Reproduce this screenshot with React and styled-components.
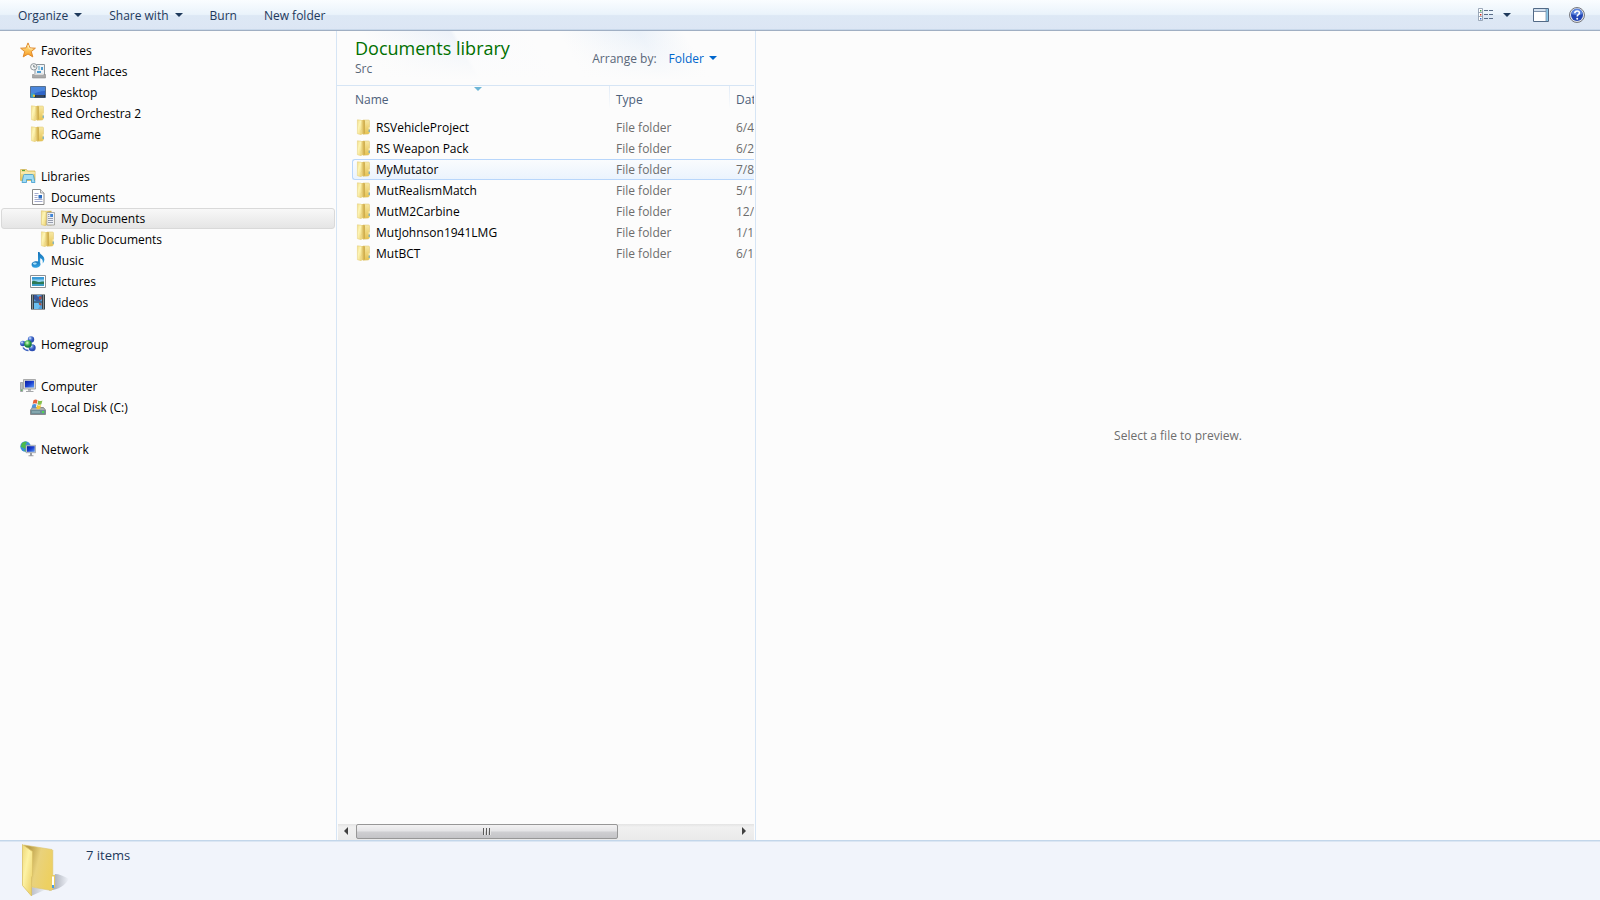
import React from "react";
import styled, { createGlobalStyle, css } from "styled-components";

const GlobalStyle = createGlobalStyle`
  * {
    box-sizing: border-box;
  }
  body {
    margin: 0;
    background: #fcfcfc;
    color: #000;
    font: 12px/19px "Open Sans", "Noto Sans", sans-serif;
  }
  button, th, td {
    font: inherit;
  }
`;

const Window = styled.div`
  display: flex;
  flex-direction: column;
  min-height: 100vh;
`;

/* toolbar */

const Toolbar = styled.header`
  display: flex;
  justify-content: space-between;
  height: 31px;
  padding: 0 15px 0 18px;
  background: linear-gradient(#fafdff 0%, #eaf3fb 48%, #dde8f5 52%, #dce6f4 100%);
  border-bottom: 1px solid #a0afc3;
  box-shadow: inset 0 -1px #c8d8ea;
`;

const ToolGroup = styled.div`
  display: flex;
  align-items: center;
  gap: ${(p) => p.$gap}px;
`;

const ToolButton = styled.button`
  display: flex;
  align-items: center;
  gap: 6px;
  padding: 0;
  border: 0;
  background: none;
  color: #1e395b;
`;

const ViewButton = styled(ToolButton)`
  gap: 9px;
  padding-right: 2px;
`;

const Caret = styled.span`
  border: 4px solid transparent;
  border-top-color: currentColor;
  border-bottom: 0;
`;

/* panes */

const Panes = styled.div`
  display: grid;
  grid-template-columns: 337px 419px 1fr;
  flex: 1;
`;

const Sidebar = styled.nav`
  display: flex;
  flex-direction: column;
  gap: 21px;
  padding: 9px 1px;
  border-right: 1px solid #d6e5f5;
`;

const Tree = styled.ul`
  margin: 0;
  padding: 0;
  list-style: none;
`;

const TreeLink = styled.a`
  display: flex;
  align-items: center;
  gap: 5px;
  height: 21px;
  padding-left: ${(p) => 18 + p.$level * 10}px;
  border: 1px solid transparent;
  border-radius: 3px;
  color: #000;
  text-decoration: none;
  ${(p) =>
    p.$selected &&
    css`
      border-color: #d9d9d9;
      background: linear-gradient(#f8f8f8, #e5e5e5);
    `}

  svg {
    margin-bottom: 1px;
  }
`;

const Library = styled.main`
  display: flex;
  flex-direction: column;
  min-width: 0;
  border-right: 1px solid #d6e5f5;
`;

const LibraryHeader = styled.div`
  display: flex;
  justify-content: space-between;
  height: 54px;
  padding: 5px 38px 0 18px;
  background: linear-gradient(rgba(252, 252, 252, 0), #fcfcfc 90%),
    linear-gradient(60deg, #fcfcfc 12%, #edf2f9 32%, #f9fbfd 33%, #fcfcfc 50%, #fcfcfc 56%, #eaf1f9 74%, #fcfcfc 84%);
`;

const Title = styled.h1`
  margin: 0;
  color: #007000;
  font-size: 18px;
  font-weight: 400;
  line-height: 24px;
`;

const Subtitle = styled.div`
  color: #5a6779;
  line-height: 18px;
`;

const Arrange = styled.div`
  display: flex;
  align-items: center;
  gap: 12px;
  height: 44px;
  color: #5a6779;
`;

const ArrangeButton = styled(ToolButton)`
  gap: 5px;
  color: #0066cc;
`;

const ListArea = styled.div`
  flex: 1;
  margin-right: 1px;
  overflow: hidden;
`;

const FileTable = styled.table`
  width: 600px;
  table-layout: fixed;
  border-collapse: separate;
  border-spacing: 0;
`;

const HeadCell = styled.th`
  position: relative;
  width: ${(p) => p.$width}px;
  height: 32px;
  padding: 4px 6px 8px ${(p) => p.$indent}px;
  color: #4c607a;
  font-weight: 400;
  text-align: left;
  background: linear-gradient(#d6e5f5, #d6e5f5) top / 100% 1px no-repeat,
    linear-gradient(#dfeaf7, #fcfcfc) right top / 1px 24px no-repeat;
`;

const SortMark = styled(Caret)`
  position: absolute;
  top: 2px;
  left: 50%;
  color: #6cb5d6;
`;

const Cell = styled.td`
  height: 21px;
  padding: 0 0 0 6px;
  color: #6d6d6d;
  line-height: 19px;
  white-space: nowrap;
`;

const NameCell = styled(Cell)`
  padding: 0 0 0 15px;
`;

const FileName = styled.div`
  display: flex;
  align-items: center;
  gap: 4px;
  height: 21px;
  padding-left: 3px;
  border: 1px solid transparent;
  border-right: 0;
  border-radius: 3px 0 0 3px;
  color: #000;

  svg {
    margin-bottom: 1px;
  }
`;

const FileRow = styled.tr`
  ${(p) =>
    p.$hover &&
    css`
      ${FileName}, ${Cell}:not(:first-child) {
        background: linear-gradient(#fafcfe, #ebf3fd);
      }
      ${FileName} {
        border-color: #b8d6fb;
      }
      ${Cell}:not(:first-child) {
        border: solid #b8d6fb;
        border-width: 1px 0;
      }
    `}
`;

const ScrollBar = styled.div`
  display: flex;
  height: 16px;
  margin: 0 1px;
  background: linear-gradient(#e3e3e3, #f0f0f0 3px, #eaeaea);
`;

const ScrollButton = styled.button`
  display: flex;
  align-items: center;
  justify-content: center;
  width: 18px;
  padding: 0 2px 2px 0;
  border: 0;
  background: none;
`;

const ScrollTrack = styled.div`
  flex: 1;
`;

const ScrollThumb = styled.div`
  display: flex;
  align-items: center;
  justify-content: center;
  gap: 1px;
  width: 69%;
  height: 15px;
  border: 1px solid #979797;
  border-radius: 2px;
  background: linear-gradient(#f3f2f3 0%, #e4e4e6 48%, #cfcfd2 52%, #c4c4c7 100%);
`;

const Grip = styled.span`
  width: 2px;
  height: 7px;
  background: linear-gradient(90deg, #5a5a5a 50%, #e8e8e8 50%);
`;

const Preview = styled.aside`
  display: flex;
  align-items: center;
  justify-content: center;
  color: #6d6d6d;
`;

const StatusBar = styled.footer`
  display: flex;
  gap: 16px;
  height: 60px;
  padding: 2px 21px;
  border-top: 1px solid #c3d6ea;
  background: #f1f4fb;
  box-shadow: inset 0 1px #dbe6f3;
  color: #1e395b;
`;

const ItemCount = styled.span`
  font-size: 13px;
  line-height: 24px;
`;

/* icons */

const Icon = ({ children }) => (
  <svg width="16" height="16" viewBox="0 0 16 16" aria-hidden="true">
    {children}
  </svg>
);

const Gradients = () => (
  <svg width="0" height="0" style={{ display: "block" }} aria-hidden="true">
    <defs>
      <linearGradient id="gold" x2="0" y2="1">
        <stop offset="0" stopColor="#f7e8a4" />
        <stop offset="1" stopColor="#e6c250" />
      </linearGradient>
      <linearGradient id="goldInner" x2="1">
        <stop offset="0" stopColor="#f6e7a2" />
        <stop offset=".55" stopColor="#dcbc5c" />
        <stop offset="1" stopColor="#c7a545" />
      </linearGradient>
      <linearGradient id="goldFlap" x2="1" y2="1">
        <stop offset="0" stopColor="#f3df8c" />
        <stop offset=".4" stopColor="#fdf5b6" />
        <stop offset="1" stopColor="#eed274" />
      </linearGradient>
      <linearGradient id="star" x2="0" y2="1">
        <stop offset="0" stopColor="#fff0a0" />
        <stop offset="1" stopColor="#f99a1c" />
      </linearGradient>
      <linearGradient id="screen" x2="1" y2="1">
        <stop offset="0" stopColor="#0a1c9c" />
        <stop offset=".5" stopColor="#1a3fd0" />
        <stop offset="1" stopColor="#5d9cf5" />
      </linearGradient>
      <linearGradient id="note" x2="0" y2="1">
        <stop offset="0" stopColor="#1773b8" />
        <stop offset="1" stopColor="#35a7e6" />
      </linearGradient>
      <radialGradient id="ballBlue" cx=".35" cy=".3">
        <stop offset="0" stopColor="#e4f0ff" />
        <stop offset=".5" stopColor="#5b83d8" />
        <stop offset="1" stopColor="#2c4fb4" />
      </radialGradient>
      <radialGradient id="ballGreen" cx=".4" cy=".35">
        <stop offset="0" stopColor="#e2fbd0" />
        <stop offset=".6" stopColor="#48b850" />
        <stop offset="1" stopColor="#1a7d3e" />
      </radialGradient>
      <linearGradient id="bigBack" x2="1" y2=".4">
        <stop offset=".2" stopColor="#bb9f4a" />
        <stop offset=".55" stopColor="#e9d27c" />
        <stop offset="1" stopColor="#edd062" />
      </linearGradient>
      <linearGradient id="bigFlap" x2="1" y2="1">
        <stop offset="0" stopColor="#eed878" />
        <stop offset=".4" stopColor="#fdf2a4" />
        <stop offset="1" stopColor="#e9cb5e" />
      </linearGradient>
      <linearGradient id="shade" x2="1">
        <stop offset="0" stopColor="#6f7480" stopOpacity=".7" />
        <stop offset="1" stopColor="#6f7480" stopOpacity="0" />
      </linearGradient>
    </defs>
  </svg>
);

const FolderIcon = () => (
  <Icon>
    <path d="M7 1h5.500q1 0 1 1v11.500l-1 1.500-5.500.300z" fill="url(#gold)" stroke="#dfc46c" strokeWidth=".5" />
    <path d="M5 1h3.500l.4 1v12.500L5 15.500z" fill="url(#goldInner)" />
    <path d="M1.400.800 5 1.200l.8 1V10l-.6 1v4.700l-3.800-1z" fill="url(#goldFlap)" stroke="#e3cb74" strokeWidth=".5" />
    <path d="M12.700 8.200h1v2.300h-1z" fill="#fff8d8" />
    <path d="M12.700 10.500h1V13h-1z" fill="#5aa6d8" />
  </Icon>
);

const MyDocsIcon = () => (
  <Icon>
    <path d="M5 .8h6.500v14.500H5z" fill="url(#goldInner)" />
    <path d="M6.800 2.500h7.700v12.500H6.800z" fill="#eef0f4" stroke="#9b9b93" strokeWidth=".8" />
    <path d="M8 4.500h1.500M8 6.500h1.500M8 8.500h5M8 10.500h5M8 12.500h5" stroke="#8b93a6" strokeWidth=".9" />
    <path d="M10.200 4H13v3h-2.800z" fill="#3f84d6" />
    <path d="M1.400.800 5.400 1.300l.8 1V10l-.6 1v4.700l-4.200-1z" fill="url(#goldFlap)" stroke="#dcc168" strokeWidth=".6" />
  </Icon>
);

const StarIcon = () => (
  <Icon>
    <path
      d="m8 .9 2 5 5.400.3-4.100 3.400 1.500 5.300L8 12l-4.800 2.900 1.500-5.300L.6 6.200 6 5.900z"
      fill="url(#star)"
      stroke="#e08a2e"
      strokeLinejoin="round"
    />
    <path d="m8 3 1.200 3.800 3.300.3" fill="none" stroke="#fff6c8" strokeWidth=".8" />
  </Icon>
);

const RecentIcon = () => (
  <Icon>
    <path d="M5 1.500h9.500V12H5z" fill="#eef3f6" stroke="#8d959c" />
    <path d="M8 4h2M8 6h2M7 8.500h2" stroke="#58a4c8" />
    <path d="M11 4h2v3h-2zM7 8h4v2H7z" fill="#4b9bd0" />
    <path d="M2.500 11.500h13v3.500h-13z" fill="#a9a9a9" stroke="#8a8a8a" strokeWidth=".6" />
    <path d="M4 12h10l-1-1.500H5z" fill="#d8d8d8" />
    <circle cx="3.800" cy="3.800" r="3.200" fill="#f2f4f5" stroke="#8f979c" />
    <path d="M3.800 2v2h1.700" fill="none" stroke="#566" strokeWidth=".8" />
  </Icon>
);

const DesktopIcon = () => (
  <Icon>
    <path d="M.5 2.500h15v11H.5z" fill="#2f65c8" stroke="#56708f" />
    <path d="M1 3h14v4C10 7 5 9 1 11z" fill="#4a86dc" />
    <path d="M4 11h11v2.500H4z" fill="#1f2f42" />
    <path d="M1 9.500h3.500v4H1z" fill="#38a6c8" />
    <circle cx="4" cy="11.800" r="1.200" fill="#e8c430" />
    <path d="M6 12h8" stroke="#4c5b6c" />
  </Icon>
);

const LibrariesIcon = () => (
  <Icon>
    <path d="M.5 1.500h6l1 1.500h7.500v9.500H.5z" fill="url(#gold)" stroke="#d5b65a" strokeWidth=".8" />
    <path d="M2 2.500h3" stroke="#5aa33c" strokeWidth="1.200" />
    <path d="M1 5h14" stroke="#fdf6cf" />
    <path d="M3.500 7.500q0-1 1-1h8q1 0 1 1l1.500 7h-3.500v-3h-5v3H2z" fill="#9fdcf5" stroke="#3f9cce" strokeWidth=".8" />
  </Icon>
);

const DocumentIcon = () => (
  <Icon>
    <path d="M2.500.5h8l3.500 3.500v11.500H2.500z" fill="#fff" stroke="#8a8a8a" />
    <path d="M10.500.5V4H14" fill="#e8e8e8" stroke="#8a8a8a" strokeWidth=".8" />
    <path d="M4.500 4.500h4M4.500 6.500h3M4.500 8.500h3M4.500 10.500h8M4.500 12.500h8" stroke="#9aa2c6" strokeWidth=".9" />
    <path d="M8.500 6H12v3.500H8.500z" fill="#2c6cc0" />
  </Icon>
);

const MusicIcon = () => (
  <Icon>
    <path d="M8 0h1.500c.5 3 5.300 3.500 4.800 8-.2 1.500-.8 2.700-1.700 3.400.7-2.700-.3-4.400-2.400-5.100v7L8 12z" fill="url(#note)" />
    <ellipse cx="6" cy="12.500" rx="4.400" ry="3.200" fill="url(#note)" transform="rotate(-12 6 12.500)" />
    <ellipse cx="4.800" cy="11.600" rx="2" ry="1.100" fill="#a6def8" />
  </Icon>
);

const PictureIcon = () => (
  <Icon>
    <path d="M.5 2.500h15v12H.5z" fill="#fff" stroke="#8a8f94" />
    <path d="M2 4h12v9H2z" fill="#8ed0f0" />
    <path d="M2 4h12v2.500H2z" fill="#3a9bd8" />
    <path d="M2 8.500c2-1.500 4 0 6 .5s4-1 6-.5V11H2z" fill="#2d7a55" />
    <path d="M2 11h12v2H2z" fill="#3b9cc4" />
  </Icon>
);

const VideoIcon = () => (
  <Icon>
    <path d="M1 .5h14v15H1z" fill="#2f3a40" />
    <path d="M4 1h8v6.500H4zM4 8.500h8V15H4z" fill="#4f9fdc" />
    <path d="M4 1h2.500L8 3l4-2v3L10 7H6L4 5z" fill="#3a5a9c" />
    <path d="M9 2.500h2.500v3H9zM9 8.500l2.500 1v2L9 11z" fill="#b5523c" />
    <path d="M4 9h4l2 3-2 3H4z" fill="#6cc0f0" />
    <path d="M2.500 1.500v14M13.500 1.500v14" stroke="#dfe6e8" strokeWidth="1.200" strokeDasharray="1 1" />
  </Icon>
);

const HomegroupIcon = () => (
  <Icon>
    <circle cx="11" cy="3.500" r="3.200" fill="url(#ballBlue)" />
    <circle cx="2.800" cy="7.500" r="2.700" fill="url(#ballBlue)" />
    <circle cx="12.200" cy="11.800" r="3.500" fill="url(#ballBlue)" />
    <path d="M3 11.500c1.500 2.500 3 3 5.500 3" fill="none" stroke="#3d63c0" strokeWidth="1.400" />
    <circle cx="8" cy="8" r="3.800" fill="url(#ballGreen)" />
  </Icon>
);

const ComputerIcon = () => (
  <Icon>
    <path d="M.5 4.500h2.200v9H.5z" fill="#b9bdc2" stroke="#8b8f94" strokeWidth=".7" />
    <path d="M1 11.500h1.300v1.300H1z" fill="#4db04d" />
    <path d="M3.500 1.500h12v9.500h-12z" fill="#d8d8d4" stroke="#98999a" strokeWidth=".8" />
    <path d="M5 2.800h9v6.700H5z" fill="url(#screen)" />
    <path d="M8 11h3v1.800H8zM6 13h7.500v1H6z" fill="#a5a7aa" />
  </Icon>
);

const DiskIcon = () => (
  <Icon>
    <path d="M2.500 8.500h11l2 2.500v4.500H.5V11z" fill="#a9acae" stroke="#77797b" strokeWidth=".8" />
    <path d="M1 11h14.200v4H1z" fill="#6d8d96" />
    <path d="M2 13h8" stroke="#9cc0c6" />
    <path d="M12 12h2v2h-2z" fill="#51d651" />
    <path d="M3.500 1.200c1.500-1 3-.8 4 0L6.700 4.800c-1.200-.8-2.500-.8-4 0z" fill="#e8623a" />
    <path d="M8.200 1.500c1.300.8 2.700.7 4.200 0l-1 3.800c-1.300.7-2.700.7-4 0z" fill="#86bf4b" />
    <path d="M2.500 5.500c1.500-.8 3-.7 4 0l-1 3.600c-1.200-.8-2.500-.7-4 0z" fill="#4d93dc" />
    <path d="M7.200 6c1.300.8 2.700.7 4 0l-1 3.600c-1.300.7-2.600.7-4 0z" fill="#f5c738" />
  </Icon>
);

const NetworkIcon = () => (
  <Icon>
    <circle cx="5.500" cy="5.500" r="5.200" fill="#3b8ed8" />
    <path d="M2 2c2-1.500 4-1.500 5-1L5.500 3.500 6 6 4.500 8 3 6.500.8 6zM4 9l2 .5v1.200L4.500 10z" fill="#4dbb4a" />
    <path d="M6 4.300h9.600v7.400H6z" fill="#d4d8de" stroke="#90969e" strokeWidth=".7" />
    <path d="M7 5.200h7.700v5.600H7z" fill="url(#screen)" />
    <path d="M10 12h2v2.300h-2zM8.500 14.300h5v1h-5z" fill="#9a9da2" />
  </Icon>
);

const ViewIcon = () => (
  <Icon>
    <path d="M.5 1.500h4v12h-4zM.5 5.500h4M.5 9.500h4" fill="#fff" stroke="#8795a8" strokeWidth=".8" />
    <path d="M2 3h1.400v1.400H2z" fill="#3c9a4a" />
    <path d="M2 7h1.400v1.400H2z" fill="#d02a20" />
    <path d="M2 11h1.400v1.400H2z" fill="#3468c8" />
    <path d="M6 3.500h4M11 3.500h4M6 7.500h4M11 7.500h4M6 11.500h4M11 11.500h4" stroke="#5a6d88" />
  </Icon>
);

const PaneIcon = () => (
  <Icon>
    <path d="M.5 1.500h15v13H.5z" fill="#fff" stroke="#536a86" />
    <path d="M1 2h14v2H1z" fill="#d3e0ee" />
    <path d="M1 4.500h12" stroke="#7d92ac" />
    <path d="M13 2h2v12h-2z" fill="#8cc8e8" />
    <path d="M13 2v12" stroke="#7d92ac" strokeWidth=".8" />
  </Icon>
);

const HelpIcon = () => (
  <Icon>
    <circle cx="8" cy="8" r="7.500" fill="#e2e4ea" stroke="#77797f" />
    <circle cx="8" cy="8" r="6" fill="#2346b4" />
    <path d="M2.500 7a5.500 5.500 0 0 1 11 0c-3 1.500-8 1.500-11 0z" fill="#5c84dc" />
    <path d="M5.800 6.200c0-3 4.600-2.900 4.600-.3 0 1.700-2.200 1.700-2.200 3.500" fill="none" stroke="#fff" strokeWidth="1.600" />
    <circle cx="8.200" cy="11.700" r="1" fill="#fff" />
  </Icon>
);

const BigFolderIcon = () => (
  <svg width="49" height="56" viewBox="0 0 49 56" aria-hidden="true">
    <path d="M28 47.500C38 47 44 42 48 36c-5-3-10-5-14-5z" fill="url(#shade)" />
    <path d="M10 53 26 46 10 44z" fill="url(#shade)" opacity=".6" />
    <path d="M3 2 31 6.500l.8 1V46l-1.500 1.500L11 44z" fill="url(#bigBack)" stroke="#dcc470" strokeWidth=".6" />
    <path d="M30 32h4v12l-3 2.500z" fill="#e8cc62" />
    <path d="M31 33.500h2v10h-2z" fill="#fff" />
    <path d="M31 42h2v3h-2z" fill="#4d9de0" />
    <path d="M1.500 1.500 11.500 8.500v24l-1 2V53L1.500 42.500z" fill="url(#bigFlap)" stroke="#d9c065" strokeWidth=".8" />
  </svg>
);

const ArrowIcon = ({ right }) => (
  <svg width="4" height="8" viewBox="0 0 4 8" aria-hidden="true">
    <path d={right ? "M0 0l4 4-4 4z" : "M4 0 0 4l4 4z"} fill="#404040" />
  </svg>
);

const groups = [
  [
    { name: "Favorites", icon: StarIcon, level: 0 },
    { name: "Recent Places", icon: RecentIcon, level: 1 },
    { name: "Desktop", icon: DesktopIcon, level: 1 },
    { name: "Red Orchestra 2", icon: FolderIcon, level: 1 },
    { name: "ROGame", icon: FolderIcon, level: 1 },
  ],
  [
    { name: "Libraries", icon: LibrariesIcon, level: 0 },
    { name: "Documents", icon: DocumentIcon, level: 1 },
    { name: "My Documents", icon: MyDocsIcon, level: 2, selected: true },
    { name: "Public Documents", icon: FolderIcon, level: 2 },
    { name: "Music", icon: MusicIcon, level: 1 },
    { name: "Pictures", icon: PictureIcon, level: 1 },
    { name: "Videos", icon: VideoIcon, level: 1 },
  ],
  [{ name: "Homegroup", icon: HomegroupIcon, level: 0 }],
  [
    { name: "Computer", icon: ComputerIcon, level: 0 },
    { name: "Local Disk (C:)", icon: DiskIcon, level: 1 },
  ],
  [{ name: "Network", icon: NetworkIcon, level: 0 }],
];

const files = [
  { name: "RSVehicleProject", date: "6/4/2014" },
  { name: "RS Weapon Pack", date: "6/22/2014" },
  { name: "MyMutator", date: "7/8/2014", hover: true },
  { name: "MutRealismMatch", date: "5/12/2014" },
  { name: "MutM2Carbine", date: "12/2/2013" },
  { name: "MutJohnson1941LMG", date: "1/12/2014" },
  { name: "MutBCT", date: "6/10/2014" },
];

export default function App() {
  return (
    <Window>
      <GlobalStyle />
      <Gradients />
      <Toolbar>
        <ToolGroup $gap={27}>
          <ToolButton>
            Organize <Caret />
          </ToolButton>
          <ToolButton>
            Share with <Caret />
          </ToolButton>
          <ToolButton>Burn</ToolButton>
          <ToolButton>New folder</ToolButton>
        </ToolGroup>
        <ToolGroup $gap={20}>
          <ViewButton aria-label="Change your view">
            <ViewIcon />
            <Caret />
          </ViewButton>
          <ToolButton aria-label="Preview pane">
            <PaneIcon />
          </ToolButton>
          <ToolButton aria-label="Help">
            <HelpIcon />
          </ToolButton>
        </ToolGroup>
      </Toolbar>
      <Panes>
        <Sidebar>
          {groups.map((group) => (
            <Tree key={group[0].name}>
              {group.map(({ name, icon: ItemIcon, level, selected }) => (
                <li key={name}>
                  <TreeLink href="#" $level={level} $selected={selected}>
                    <ItemIcon />
                    {name}
                  </TreeLink>
                </li>
              ))}
            </Tree>
          ))}
        </Sidebar>
        <Library>
          <LibraryHeader>
            <div>
              <Title>Documents library</Title>
              <Subtitle>Src</Subtitle>
            </div>
            <Arrange>
              Arrange by:
              <ArrangeButton>
                Folder <Caret />
              </ArrangeButton>
            </Arrange>
          </LibraryHeader>
          <ListArea>
            <FileTable>
              <thead>
                <tr>
                  <HeadCell $width={273} $indent={18}>
                    Name
                    <SortMark />
                  </HeadCell>
                  <HeadCell $width={120} $indent={6}>
                    Type
                  </HeadCell>
                  <HeadCell $indent={6}>Date modified</HeadCell>
                </tr>
              </thead>
              <tbody>
                {files.map(({ name, date, hover }) => (
                  <FileRow key={name} $hover={hover}>
                    <NameCell>
                      <FileName>
                        <FolderIcon />
                        {name}
                      </FileName>
                    </NameCell>
                    <Cell>File folder</Cell>
                    <Cell>{date}</Cell>
                  </FileRow>
                ))}
              </tbody>
            </FileTable>
          </ListArea>
          <ScrollBar>
            <ScrollButton aria-label="Scroll left">
              <ArrowIcon />
            </ScrollButton>
            <ScrollTrack>
              <ScrollThumb>
                <Grip />
                <Grip />
                <Grip />
              </ScrollThumb>
            </ScrollTrack>
            <ScrollButton aria-label="Scroll right">
              <ArrowIcon right />
            </ScrollButton>
          </ScrollBar>
        </Library>
        <Preview>Select a file to preview.</Preview>
      </Panes>
      <StatusBar>
        <BigFolderIcon />
        <ItemCount>7 items</ItemCount>
      </StatusBar>
    </Window>
  );
}
